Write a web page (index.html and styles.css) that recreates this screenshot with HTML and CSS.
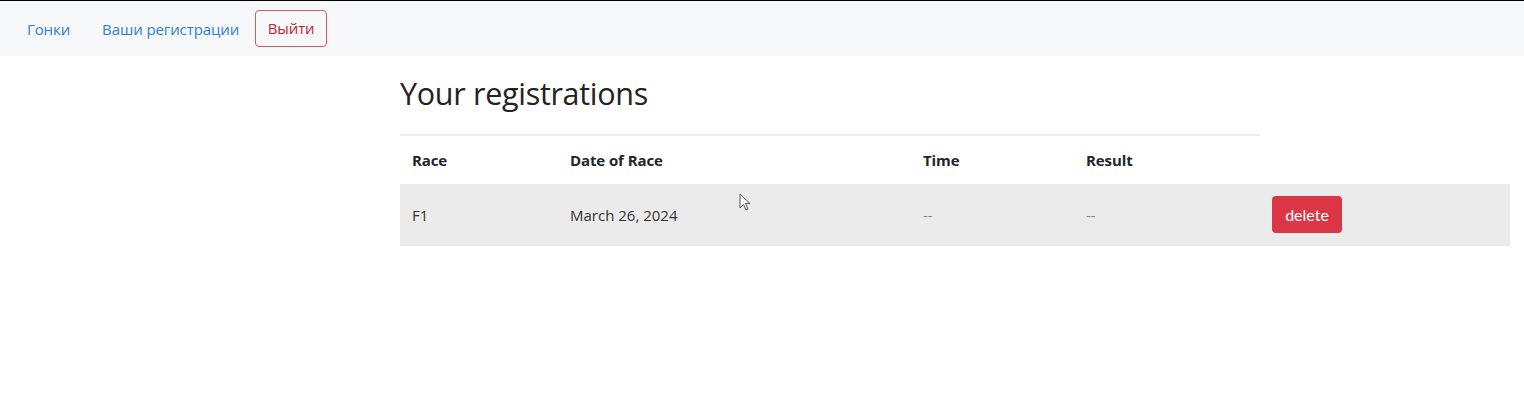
FILE: index.html
```html
<!DOCTYPE html>
<html lang="ru">
<head>
<meta charset="utf-8">
<title>Your registrations</title>
<link rel="stylesheet" href="styles.css">
</head>
<body>
<nav class="navbar">
  <a class="nav-link" href="#">Гонки</a>
  <a class="nav-link" href="#">Ваши регистрации</a>
  <button class="btn-logout" type="button">Выйти</button>
</nav>
<main class="content">
  <h2 class="title">Your registrations</h2>
  <table class="reg-table">
    <thead>
      <tr>
        <th class="c-race">Race</th>
        <th class="c-date">Date of Race</th>
        <th class="c-time">Time</th>
        <th class="c-result">Result</th>
        <th class="c-action"></th>
      </tr>
    </thead>
    <tbody>
      <tr>
        <td>F1</td>
        <td>March 26, 2024</td>
        <td class="muted">--</td>
        <td class="muted">--</td>
        <td><button class="btn-delete" type="button">delete</button></td>
      </tr>
    </tbody>
  </table>
</main>
<svg class="cursor" width="14" height="20" viewBox="0 0 14 20" aria-hidden="true">
  <path d="M1 1 L1 15 L4.5 11.5 L7 17 L9 16 L6.5 10.5 L11 10.5 Z" fill="#fff" stroke="#555" stroke-width="1" stroke-linejoin="round"/>
</svg>
</body>
</html>
```

FILE: styles.css
```css
html, body {
  margin: 0;
  padding: 0;
  background: #ffffff;
}

body {
  font-family: "Open Sans", "Noto Sans", sans-serif;
  color: #212529;
  border-top: 1px solid #000;
  position: relative;
  min-height: 405px;
}

.navbar {
  display: flex;
  align-items: center;
  height: 55px;
  background: #f7f8f9;
  padding-left: 16px;
  box-sizing: border-box;
}

.nav-link {
  font-size: 15px;
  color: #2f7fd6;
  text-decoration: none;
  padding: 0 11px;
  letter-spacing: -0.1px;
}

.nav-link + .nav-link {
  margin-left: 10px;
}

.btn-logout {
  margin-left: 5px;
  margin-top: -1px;
  width: 72px;
  height: 37px;
  border: 1px solid #d65a6a;
  border-radius: 4px;
  background: transparent;
  color: #c82333;
  font-family: "Open Sans", "Noto Sans", sans-serif;
  font-size: 15px;
  padding: 0;
  letter-spacing: -0.1px;
}

.content {
  margin-left: 400px;
  display: flex;
  flex-direction: column;
}

.title {
  margin: 17px 0 0;
  font-size: 30.5px;
  font-weight: 400;
  line-height: 40px;
  color: #222;
  letter-spacing: -0.3px;
}

.reg-table {
  margin-top: 21px;
  width: 1110px;
  border-collapse: collapse;
  font-size: 15px;
}

.reg-table th {
  text-align: left;
  font-weight: 700;
  height: 48px;
  padding: 0 12px;
  border-top: 2px solid #eceeef;
  letter-spacing: -0.1px;
}

.reg-table th.c-action {
  border-top: 2px solid transparent;
}

.c-race { width: 134px; }
.c-date { width: 329px; }
.c-time { width: 139px; }
.c-result { width: 162px; }

.reg-table td {
  background: #ebebeb;
  height: 62px;
  padding: 0 12px;
  vertical-align: middle;
  color: #333;
}

.reg-table td.muted {
  color: #888;
}

.btn-delete {
  width: 70px;
  height: 37px;
  border: none;
  border-radius: 4px;
  background: #dc3545;
  color: #fff;
  font-family: "Lato", "Open Sans", sans-serif;
  font-size: 16px;
  padding: 0;
  margin-top: -1px;
}

.cursor {
  position: absolute;
  left: 739px;
  top: 192px;
}
```
